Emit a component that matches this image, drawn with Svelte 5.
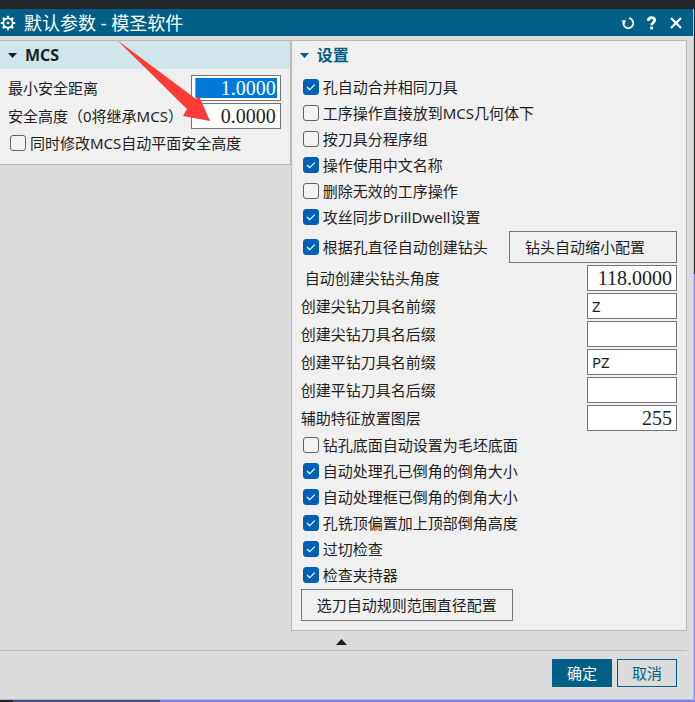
<script lang="ts">
  let mcsOpen = $state(true);
  let settingsOpen = $state(true);

  let safeDistance = $state("1.0000");
  let safeHeight = $state("0.0000");
  let syncPlane = $state(false);

  let toolOptions = $state([
    { id: "merge", text: "孔自动合并相同刀具", checked: true },
    { id: "geometry", text: "工序操作直接放到MCS几何体下", checked: false },
    { id: "group", text: "按刀具分程序组", checked: false },
    { id: "chinese", text: "操作使用中文名称", checked: true },
    { id: "clean", text: "删除无效的工序操作", checked: false },
    { id: "dwell", text: "攻丝同步DrillDwell设置", checked: true },
  ]);

  let autoDrill = $state(true);

  let fields = $state([
    { id: "angle", text: "\u00a0自动创建尖钻头角度", value: "118.0000", numeric: true },
    { id: "tip-prefix", text: "创建尖钻刀具名前缀", value: "Z", numeric: false },
    { id: "tip-suffix", text: "创建尖钻刀具名后缀", value: "", numeric: false },
    { id: "flat-prefix", text: "创建平钻刀具名前缀", value: "PZ", numeric: false },
    { id: "flat-suffix", text: "创建平钻刀具名后缀", value: "", numeric: false },
    { id: "layer", text: "辅助特征放置图层", value: "255", numeric: true },
  ]);

  let checkOptions = $state([
    { id: "blank", text: "钻孔底面自动设置为毛坯底面", checked: false },
    { id: "hole", text: "自动处理孔已倒角的倒角大小", checked: true },
    { id: "frame", text: "自动处理框已倒角的倒角大小", checked: true },
    { id: "offset", text: "孔铣顶偏置加上顶部倒角高度", checked: true },
    { id: "gouge", text: "过切检查", checked: true },
    { id: "holder", text: "检查夹持器", checked: true },
  ]);
</script>

{#snippet caret()}
  <svg width="9" height="5" viewBox="0 0 9 5"><path d="M0 0h9L4.5 5z" fill="currentColor" /></svg>
{/snippet}

<div class="dialog">
  <header class="titlebar">
    <svg class="gear" width="16" height="16" viewBox="0 0 16 16">
      <circle cx="8" cy="8" r="4.7" fill="none" stroke="#fff" stroke-width="1.8" />
      <circle cx="8" cy="8" r="1.3" fill="#fff" />
      <path
        d="M8 .8v2.4M8 12.8v2.4M.8 8h2.4M12.8 8h2.4M2.9 2.9l1.7 1.7M11.4 11.4l1.7 1.7M2.9 13.1l1.7-1.7M11.4 4.6l1.7-1.7"
        stroke="#fff"
        stroke-width="2.2"
      />
    </svg>
    <h1>默认参数 - 模圣软件</h1>
    <button class="tool" aria-label="重置">
      <svg width="14" height="14" viewBox="0 0 14 14">
        <path d="M8 2.2A5 5 0 1 1 2.4 6" fill="none" stroke="#fff" stroke-width="1.8" />
        <path d="M.4 4.600L5 4.200 3.600 8.200z" fill="#fff" />
      </svg>
    </button>
    <button class="tool" aria-label="帮助">
      <svg width="14" height="14" viewBox="0 0 14 14">
        <path
          d="M3.400 4.800C3.400 2.600 4.700 1.700 6.500 1.700s3.200 1 3.200 2.800C9.700 6.600 6.700 6.500 6.700 9.300"
          fill="none"
          stroke="#fff"
          stroke-width="2.800"
        />
        <path d="M5.200 10.600h3v2.800h-3z" fill="#fff" />
      </svg>
    </button>
    <button class="tool" aria-label="关闭">
      <svg width="14" height="14" viewBox="0 0 14 14">
        <path d="M2 2l10 10M12 2L2 12" stroke="#fff" stroke-width="2.2" />
      </svg>
    </button>
  </header>

  <main class="columns">
    <section class="panel left">
      <button class="heading tinted" onclick={() => (mcsOpen = !mcsOpen)}>
        {@render caret()}MCS
      </button>
      {#if mcsOpen}
        <div class="rows">
          <div class="row">
            <label for="safe-distance">最小安全距离</label>
            <span class="box selected">
              <input id="safe-distance" class="numeric" bind:value={safeDistance} />
            </span>
          </div>
          <div class="row">
            <label for="safe-height">安全高度（0将继承MCS）</label>
            <span class="box">
              <input id="safe-height" class="numeric" bind:value={safeHeight} />
            </span>
          </div>
          <label class="check"><input type="checkbox" bind:checked={syncPlane} />同时修改MCS自动平面安全高度</label>
        </div>
      {/if}
    </section>

    <section class="panel right">
      <button class="heading" onclick={() => (settingsOpen = !settingsOpen)}>
        {@render caret()}设置
      </button>
      {#if settingsOpen}
        <div class="rows">
          {#each toolOptions as option (option.id)}
            <label class="check"><input type="checkbox" bind:checked={option.checked} />{option.text}</label>
          {/each}

          <div class="row tall">
            <label class="check"><input type="checkbox" bind:checked={autoDrill} />根据孔直径自动创建钻头</label>
            <button class="config">钻头自动缩小配置</button>
          </div>

          {#each fields as field (field.id)}
            <div class="row">
              <label for={field.id}>{field.text}</label>
              <span class="box">
                <input id={field.id} class:numeric={field.numeric} bind:value={field.value} />
              </span>
            </div>
          {/each}

          {#each checkOptions as option (option.id)}
            <label class="check"><input type="checkbox" bind:checked={option.checked} />{option.text}</label>
          {/each}

          <button class="config rules">选刀自动规则范围直径配置</button>
        </div>
      {/if}
    </section>
  </main>

  <div class="collapse">
    <button aria-label="收起">
      <svg width="11" height="6" viewBox="0 0 11 6"><path d="M0 6h11L5.500 0z" fill="#1e1e1e" /></svg>
    </button>
  </div>

  <footer>
    <button class="action primary">确定</button>
    <button class="action">取消</button>
  </footer>

  <!-- callout pointing at the safe height box -->
  <svg class="arrow" width="94" height="84" viewBox="0 0 94 84">
    <path d="M0 0L79 59 82 56 93 81 66 76 70 69z" fill="#fd3c38" />
  </svg>
</div>

<style>
  :global(body) {
    margin: 0;
    background:
      linear-gradient(90deg, #242529 13px, #4c4a92 13px 160px, #8780fb 160px) bottom / 100% 2px no-repeat,
      linear-gradient(#242529 274px, #8780fb 274px);
  }

  .dialog,
  button,
  input {
    font-family: "Noto Sans", "Noto Sans CJK SC", sans-serif;
    font-size: 15px;
    line-height: 20px;
    color: #1e1e1e;
  }

  .dialog {
    position: relative;
    box-sizing: border-box;
    display: flex;
    flex-direction: column;
    min-height: calc(100vh - 11px);
    margin: 0 1px 2px 0;
    border-right: 1px solid #c4c4c4;
    border-bottom: 1px solid #bababa;
    background: #dcdcdc;
  }

  :global(#app) {
    padding-top: 9px;
    background: linear-gradient(#242529, #242529) top / 100% 9px no-repeat;
  }

  button {
    box-sizing: border-box;
    margin: 0;
    padding: 0;
    border: 0;
    background: none;
    cursor: pointer;
  }

  svg {
    display: block;
  }

  .titlebar {
    display: flex;
    align-items: center;
    height: 27px;
    padding-right: 10px;
    background: #005f87;
  }

  h1 {
    flex: 1;
    margin: 0 0 0 8px;
    font-size: 18px;
    font-weight: 400;
    line-height: 26px;
    color: #fff;
  }

  .tool {
    margin-left: 10px;
  }

  .columns {
    display: flex;
    align-items: flex-start;
    padding: 4px 6px 0 0;
  }

  .panel {
    box-sizing: border-box;
    border: 1px solid #b9b9b9;
    background: #f0f0f0;
  }

  .left {
    flex: 291;
    border-left: 0;
  }

  .right {
    flex: 396;
  }

  .heading {
    display: flex;
    align-items: center;
    gap: 8px;
    width: 100%;
    height: 28px;
    padding: 0 8px;
    font-size: 16px;
    font-weight: 700;
  }

  .tinted {
    background: #cfe6eb;
  }

  .right .heading {
    color: #005f87;
  }

  .rows {
    display: flex;
    flex-direction: column;
    padding: 5px 9px 9px;
  }

  .left .rows {
    padding: 5px 9px 8px 8px;
  }

  .row {
    display: flex;
    align-items: center;
    justify-content: space-between;
    height: 28px;
    white-space: nowrap;
  }

  .tall {
    height: 34px;
  }

  .box {
    box-sizing: border-box;
    display: flex;
    flex: none;
    width: 90px;
    height: 26px;
    padding: 2px 3px;
    border: 1px solid #767676;
    background: #fff;
  }

  input:not([type="checkbox"]) {
    box-sizing: border-box;
    width: 100%;
    height: 20px;
    margin: 0;
    padding: 0 1px;
    border: 0;
    outline: 0;
    background: none;
  }

  input.numeric {
    font-family: "Liberation Serif", serif;
    font-size: 20px;
    text-align: right;
  }

  .selected input.numeric {
    border-left: 1px solid #f08a24;
    background: #0078d7;
    color: #fff;
  }

  .check {
    display: flex;
    align-items: center;
    gap: 4px;
    height: 26px;
    padding-left: 2px;
    white-space: nowrap;
  }

  input[type="checkbox"] {
    appearance: none;
    box-sizing: border-box;
    width: 16px;
    height: 16px;
    margin: 0;
    border: 1px solid #626262;
    border-radius: 3px;
    background: #f3f3f3;
  }

  input[type="checkbox"]:checked {
    border-color: #005fb8;
    background: #005fb8
      url("data:image/svg+xml,%3Csvg xmlns='http://www.w3.org/2000/svg' viewBox='0 0 14 14'%3E%3Cpath d='M3 7l2.700 2.700 5-5' fill='none' stroke='white' stroke-width='1.2'/%3E%3C/svg%3E");
  }

  .config {
    width: 168px;
    height: 32px;
    padding: 0 15px;
    border: 1px solid #767676;
    text-align: left;
  }

  .rules {
    width: 212px;
    margin-top: 1px;
  }

  .collapse {
    display: flex;
    justify-content: center;
    margin-right: 6px;
    padding: 8px 4px 5px 0;
    border-bottom: 1px solid #b9b9b9;
  }

  footer {
    display: flex;
    justify-content: flex-end;
    gap: 5px;
    padding: 8px 16px 12px;
  }

  .action {
    width: 60px;
    height: 28px;
    border: 1px solid #005f87;
    color: #005f87;
  }

  .primary {
    background: #005f87;
    color: #fff;
  }

  .arrow {
    position: absolute;
    top: 31px;
    left: 117px;
    pointer-events: none;
  }
</style>
